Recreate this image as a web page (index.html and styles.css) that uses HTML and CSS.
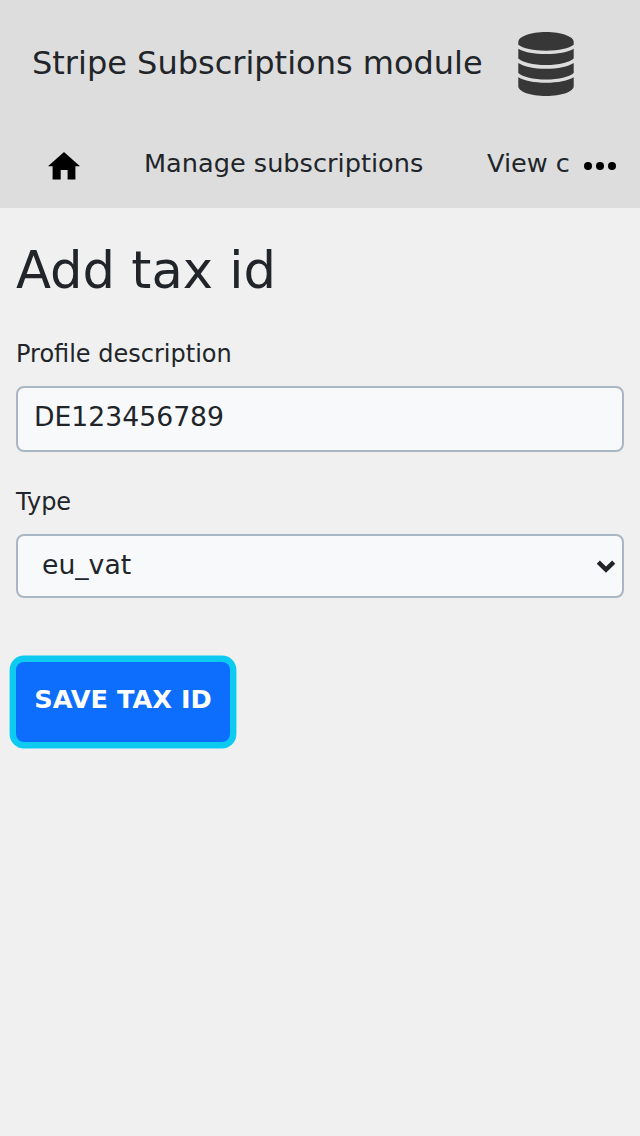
FILE: index.html
```
<!DOCTYPE html>
<html lang="en">
<head>
<meta charset="utf-8">
<title>Add tax id</title>
<link rel="stylesheet" href="styles.css">
</head>
<body>
<header class="header">
  <div class="brand">
    <span class="brand-title">Stripe Subscriptions module</span>
    <svg class="brand-icon" viewBox="0 0 56 64" width="56" height="64" fill="#373737">
      <path d="M.3 10C.3 4.500 12.500 0 28 0s27.700 4.500 27.700 10v2.800C51 16.500 41 18.700 28 18.700S5 16.500.3 12.800z"/>
      <path d="M.3 16.700C6 20 16 22 28 22s22-2 27.700-5.300v9.800C51 30.600 41 33 28 33S5 30.600.3 26.500z"/>
      <path d="M.3 30.900C6 34.500 16 36.800 28 36.800s22-2.300 27.700-5.900v10.200C51 45.200 41 47.600 28 47.600S5 45.200.3 41.100z"/>
      <path d="M.3 45.200C6 48.600 16 50.700 28 50.700s22-2.100 27.700-5.500V54.200C55.700 59.500 43.500 64 28 64S.3 59.500.3 54.200z"/>
    </svg>
  </div>
  <nav class="nav">
    <a class="home"><svg viewBox="0 0 32 28" width="32" height="28"><path d="M16 0L32 14.300H27.400V27.600H19.600V18H12.700V27.600H4.600V14.300H0z"/></svg></a>
    <a class="nav-link">Manage subscriptions</a>
    <a class="nav-link cut">View c</a>
    <svg class="more" viewBox="0 0 32 8" width="32" height="8"><circle cx="4" cy="4" r="4"/><circle cx="16" cy="4" r="4"/><circle cx="28" cy="4" r="4"/></svg>
  </nav>
</header>
<main class="main">
  <h1 class="heading">Add tax id</h1>
  <label class="label" for="description">Profile description</label>
  <input class="field" id="description" type="text" value="DE123456789">
  <label class="label" for="type">Type</label>
  <div class="select-wrap">
    <select class="field select" id="type"><option>eu_vat</option></select>
    <svg class="chevron" viewBox="0 0 20 14" width="20" height="14"><path d="M2.300 2.200L10 9.600L17.700 2.200" fill="none" stroke="#212529" stroke-width="4.500"/></svg>
  </div>
  <button class="save">SAVE TAX ID</button>
</main>
</body>
</html>
```
FILE: styles.css
```
* { box-sizing: border-box; }
body { margin: 0; min-height: 1136px; background: #f0f0f0; color: #212529; font-family: "DejaVu Sans", sans-serif; }
.header { height: 208px; background: #ddd; overflow: hidden; }
.brand { display: flex; align-items: center; height: 128px; padding-left: 32px; }
.brand-title { width: 486px; font-size: 32px; line-height: 48px; padding-bottom: 2px; white-space: nowrap; }
.brand-icon { flex: none; }
.nav { display: flex; height: 80px; padding: 16px 24px 0 48px; white-space: nowrap; font-size: 25.6px; line-height: 38px; }
.home { width: 96px; flex: none; padding-top: 8px; line-height: 0; }
.nav-link { width: 343px; flex: none; }
.cut { width: 83px; margin-right: 14px; overflow: hidden; }
.more { flex: none; margin: 18px 0 0; }
.main { padding: 24px 16px 0; }
.heading { margin: 0 0 32px; font-size: 51.2px; line-height: 76px; font-weight: 400; }
.label { display: block; height: 46px; font-size: 24px; line-height: 28px; }
.field { display: block; width: 100%; height: 66px; margin: 0 0 36px; padding: 0 16px 6px; border: 2px solid #a9b6c3; border-radius: 8px; background: #f8f9fb; color: #212529; font: 26.667px "DejaVu Sans", sans-serif; appearance: none; }
.select-wrap { position: relative; }
.select { height: 64px; margin-bottom: 64px; padding: 0 24px 4px; }
.chevron { position: absolute; right: 8px; top: 26px; }
.save { display: block; width: 214px; height: 80px; padding: 0 0 6px; border: 0; border-radius: 8px; background: #0d6efd; box-shadow: 0 0 0 6.400px #0dcaf0; color: #fff; font: bold 25.600px "DejaVu Sans", sans-serif; white-space: nowrap; }
```
